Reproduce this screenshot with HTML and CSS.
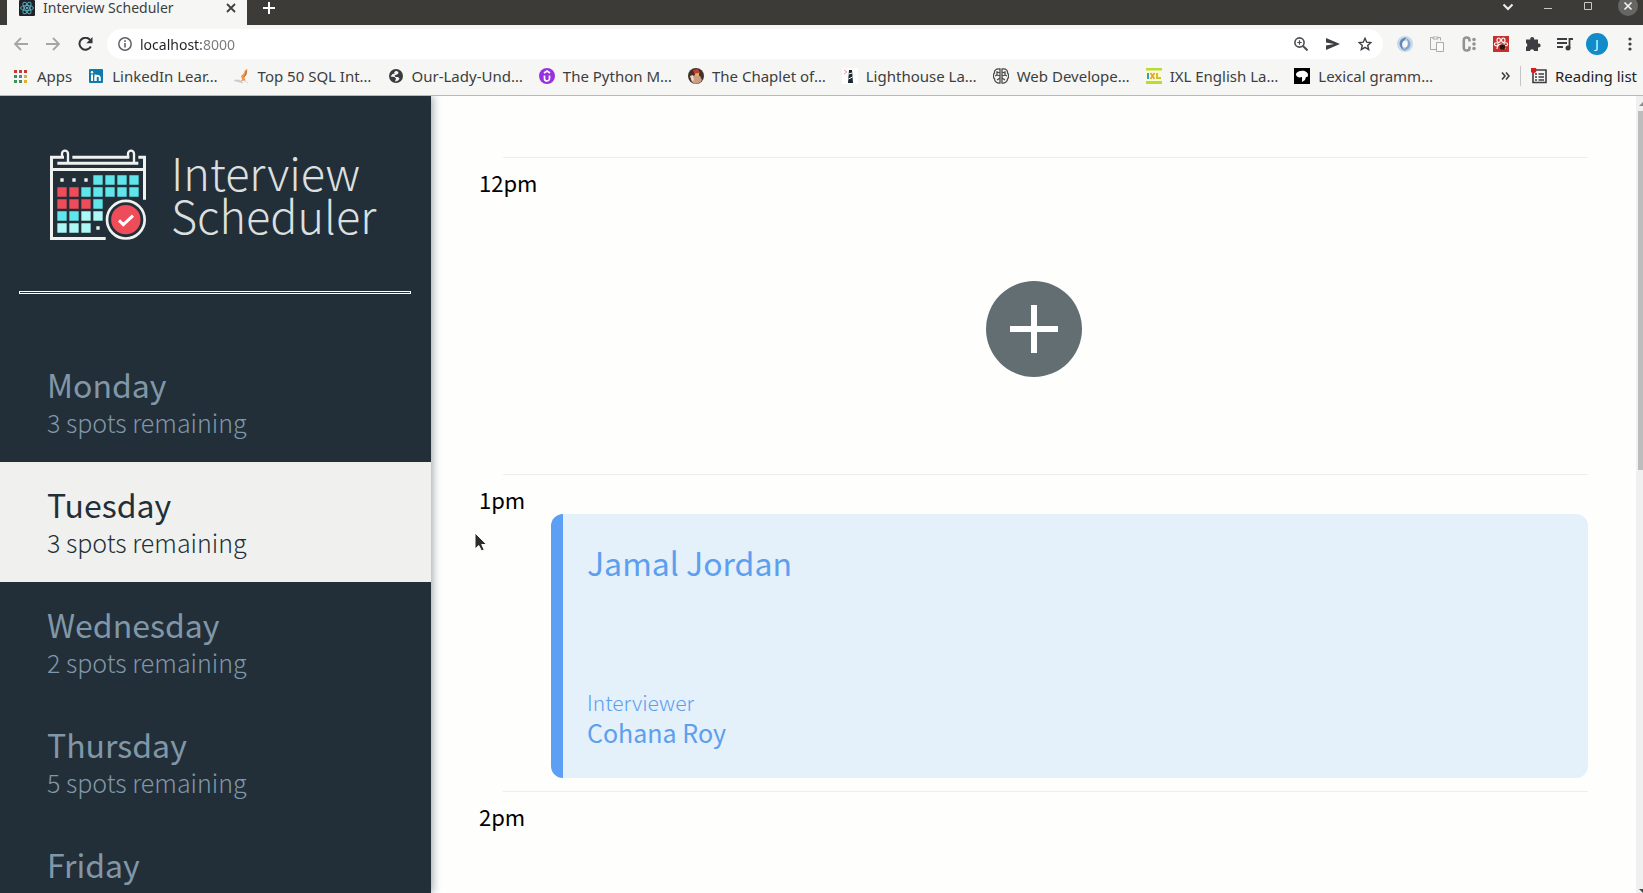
FILE: index.html
```html
<!DOCTYPE html>
<html lang="en">
<head>
<meta charset="utf-8">
<meta name="viewport" content="width=device-width, initial-scale=1">
<title>Interview Scheduler</title>
<link rel="stylesheet" href="styles.css">
</head>
<body>
<div class="window">
  <header class="chrome">
    <div class="tabstrip">
      <div class="tab">
        <svg class="tab-icon" width="16" height="16" viewBox="0 0 16 16" aria-hidden="true"><rect width="16" height="16" rx="1" fill="#20232a"/><g fill="none" stroke="#5aa9b8"><ellipse cx="8" cy="8" rx="6.5" ry="2.5"/><ellipse cx="8" cy="8" rx="6.5" ry="2.5" transform="rotate(60 8 8)"/><ellipse cx="8" cy="8" rx="6.5" ry="2.5" transform="rotate(120 8 8)"/></g><circle cx="8" cy="8" r="1.3" fill="#5aa9b8"/></svg>
        <span class="tab-title">Interview Scheduler</span>
        <button class="icon-btn" aria-label="Close tab"><svg width="10" height="10" viewBox="0 0 10 10"><path d="M1 1l8 8M9 1l-8 8" stroke="#3c4043" stroke-width="1.8"/></svg></button>
      </div>
      <button class="icon-btn new-tab" aria-label="New tab"><svg width="12" height="12" viewBox="0 0 12 12"><path d="M6 0v12M0 6h12" stroke="#fff" stroke-width="2"/></svg></button>
      <div class="window-controls">
        <button class="icon-btn" aria-label="Search tabs"><svg width="12" height="12" viewBox="0 0 12 12"><path d="M1.500 4.500L6 9l4.500-4.500" fill="none" stroke="#eee" stroke-width="2"/></svg></button>
        <button class="icon-btn" aria-label="Minimize"><svg width="8" height="12" viewBox="0 0 8 12"><path d="M0 8.500h8" stroke="#c8c8c4"/></svg></button>
        <button class="icon-btn" aria-label="Maximize"><svg width="8" height="12" viewBox="0 0 8 12"><path d="M.5 2.500h7v7h-7z" fill="none" stroke="#c8c8c4"/></svg></button>
        <button class="icon-btn" aria-label="Close window"><svg width="20" height="20" viewBox="0 0 20 20"><circle cx="10" cy="10" r="10" fill="#666663"/><path d="M6.500 6.500l7 7M13.500 6.500l-7 7" stroke="#f4f4f2" stroke-width="1.600"/></svg></button>
      </div>
    </div>

    <div class="toolbar">
      <div class="nav-buttons">
        <button class="icon-btn" aria-label="Back"><svg width="14" height="14" viewBox="0 0 14 14"><path d="M14 7H1.500M7 1L1 7l6 6" fill="none" stroke="#a3a5a7" stroke-width="1.800"/></svg></button>
        <button class="icon-btn" aria-label="Forward"><svg width="14" height="14" viewBox="0 0 14 14"><path d="M0 7h12.500M7 1l6 6-6 6" fill="none" stroke="#a3a5a7" stroke-width="1.800"/></svg></button>
        <button class="icon-btn" aria-label="Reload"><svg width="15" height="14" viewBox="0 0 15 14"><path d="M12.800 9.500A6 6 0 1 1 12 2.800" fill="none" stroke="#35363a" stroke-width="2"/><path d="M14.500 0v6.200H8.300z" fill="#35363a"/></svg></button>
      </div>
      <div class="omnibox">
        <svg width="14" height="14" viewBox="0 0 14 14" aria-hidden="true"><circle cx="7" cy="7" r="6.200" fill="none" stroke="#5f6368" stroke-width="1.500"/><path d="M7 6v4.500M7 3.300V5" stroke="#5f6368" stroke-width="1.600"/></svg>
        <input class="url" type="text" aria-label="Address" value="localhost:8000" spellcheck="false">
        <div class="omni-actions">
          <button class="icon-btn" aria-label="Zoom"><svg width="14" height="14" viewBox="0 0 14 14"><circle cx="5.500" cy="5.500" r="4.600" fill="none" stroke="#4b4d50" stroke-width="1.600"/><path d="M9 9l4.500 4.500" stroke="#4b4d50" stroke-width="2"/><path d="M5.500 3.300v4.400M3.300 5.500h4.400" stroke="#4b4d50" stroke-width="1.200"/></svg></button>
          <button class="icon-btn" aria-label="Send"><svg width="14" height="12" viewBox="0 0 14 12"><path d="M0 0l14 6-14 6V7.400L8 6 0 4.600z" fill="#3d3f42"/></svg></button>
          <button class="icon-btn" aria-label="Bookmark this page"><svg width="14" height="14" viewBox="0 0 14 14"><path d="M7 1.300l1.700 3.900 4.200.4-3.200 2.800 1 4.200L7 10.400l-3.700 2.200 1-4.200L1.100 5.600l4.200-.4z" fill="none" stroke="#3d3f42" stroke-width="1.400"/></svg></button>
        </div>
      </div>
      <div class="extensions">
        <button class="icon-btn" aria-label="JSON viewer"><svg width="16" height="16" viewBox="0 0 16 16"><circle cx="8" cy="8" r="8" fill="#c8d8ea"/><path d="M9 1.500C4 2 1.500 6 3 10c1 3 4 4.500 6 4.500-4-2-5-6-3-8.500C7.500 4 9 3.500 9 1.500z" fill="#6089b8"/><path d="M7 14.500c5-.5 7.500-4.500 6-8.500C12 3 9 1.500 7.500 1.500c3.500 2 4.500 6 2.500 8.500-1.500 1.700-3 2.500-3 4.500z" fill="#86a7ce"/><ellipse cx="8" cy="8" rx="2.500" ry="3.300" fill="#f7f8f8"/></svg></button>
        <button class="icon-btn" aria-label="Clipboard"><svg width="16" height="16" viewBox="0 0 16 16"><path d="M7 13.500H1.500v-12H4m5 0h2.500v3" fill="none" stroke="#aaa"/><path d="M4 3V1h1.500a1.200 1.200 0 0 1 2 0H9v2z" fill="none" stroke="#aaa"/><path d="M7.500 6.500h7v9h-7z" fill="#fafafa" stroke="#aaa"/></svg></button>
        <button class="icon-btn" aria-label="Colour picker"><svg width="16" height="16" viewBox="0 0 16 16"><path d="M8.500 5.500V4a2.500 2.500 0 0 0-2.500-2.500h-.5A2.700 2.700 0 0 0 2.800 4v8a2.500 2.500 0 0 0 2.700 2.500H6A2.500 2.500 0 0 0 8.500 12v-1.500" fill="none" stroke="#939393" stroke-width="2.600"/><g fill="#939393"><circle cx="13" cy="3.500" r="1.800"/><circle cx="13" cy="8" r="1.800"/><circle cx="13" cy="12.500" r="1.800"/></g></svg></button>
        <button class="icon-btn" aria-label="React tools"><svg width="16" height="16" viewBox="0 0 16 16"><path fill="#c8302e" d="M0 0h16v16H0z"/><g fill="none" stroke="#fff" stroke-width="1.100"><ellipse cx="5.700" cy="4.200" rx="1.700" ry="2.200"/><ellipse cx="10.300" cy="4.200" rx="1.700" ry="2.200"/><ellipse cx="3.300" cy="8.300" rx="1.900" ry="1.600"/><ellipse cx="12.700" cy="8.300" rx="1.900" ry="1.600"/><path d="M4 13c0-3 2-5 4-5s4 2 4 5"/></g><circle cx="9.500" cy="11" r="2.800" fill="#321314"/></svg></button>
        <button class="icon-btn" aria-label="Extensions"><svg width="16" height="16" viewBox="0 0 16 16"><path d="M1 3.500h4.300a2 2 0 1 1 3.800 0H13v4a2 2 0 1 1 0 3.800V15H9.200a2.200 2.200 0 0 0-4.300 0H1v-4a2.200 2.200 0 0 0 0-4z" fill="#3c3e41"/></svg></button>
        <button class="icon-btn" aria-label="Media controls"><svg width="16" height="16" viewBox="0 0 16 16"><path d="M0 3h10M0 7h10M0 11h6M12.500 12V3H16" fill="none" stroke="#3c3e41" stroke-width="1.800"/><circle cx="11" cy="12" r="2.500" fill="#3c3e41"/></svg></button>
        <button class="avatar" aria-label="Profile">J</button>
        <button class="icon-btn" aria-label="Menu"><svg width="4" height="14" viewBox="0 0 4 14" fill="#3c3e41"><circle cx="2" cy="2" r="1.600"/><circle cx="2" cy="7" r="1.600"/><circle cx="2" cy="12" r="1.600"/></svg></button>
      </div>
    </div>

    <nav class="bookmarks" aria-label="Bookmarks">
      <a class="bookmark" href="#"><svg width="16" height="16" viewBox="0 0 16 16"><path fill="#c33b32" d="M1 2h3v3H1zM6 2h3v3H6zM11 2h3v3h-3z"/><path fill="#3d9258" d="M1 7h3v3H1zM1 12h3v3H1z"/><path fill="#4288c9" d="M6 7h3v3H6z"/><path fill="#ddb032" d="M11 7h3v3h-3zM11 12h3v3h-3z"/><path fill="#3d9258" d="M6 12h3v3H6z"/></svg><span>Apps</span></a>
      <a class="bookmark" href="#"><svg width="16" height="16" viewBox="0 0 16 16"><rect x="1" y="1" width="14" height="14" rx="1" fill="#0f7bab"/><g fill="#fff"><path d="M3 6.500h2V13H3zM6.500 6.500h2V13h-2z"/><circle cx="4" cy="4.300" r="1.200"/></g><path d="M7.500 13V9.500a2.200 2.200 0 0 1 4.300 0V13" fill="none" stroke="#fff" stroke-width="2"/></svg><span>LinkedIn Lear…</span></a>
      <a class="bookmark" href="#"><svg width="16" height="16" viewBox="0 0 16 16"><path d="M13.500 1l-1 5-2 3 1 4-2-.5-3 1.500 1.500-2.500L7 8l3-3 1-3z" fill="#ee9a55"/><path d="M12.500 3l-.8 4-2 2" fill="none" stroke="#b85c1d"/><path d="M0 12.500c4-1.500 7 0 9 2.500-3-1-6-1.500-9-2.500zM10 12.500l4 2.500" fill="#bfc8d2" stroke="#c5ccd4" stroke-width=".7"/></svg><span>Top 50 SQL Int…</span></a>
      <a class="bookmark" href="#"><svg width="16" height="16" viewBox="0 0 16 16"><circle cx="8" cy="8" r="7" fill="#3a3b3e"/><path d="M2.500 8.500l4 .5 1.500 1.500-1 3c2 0 4-1 4.500-3L10 9H7.500L6.500 7.500 10 6l.5-2L8 2.800 6 4.500l1 1-2.500.5z" fill="#f5f5f3"/></svg><span>Our-Lady-Und…</span></a>
      <a class="bookmark" href="#"><svg width="16" height="16" viewBox="0 0 16 16"><circle cx="8" cy="8" r="8" fill="#9630e0"/><path d="M5.500 7.500v3a2.500 2.500 0 0 0 5 0v-3M5 5l3-2 3 2" fill="none" stroke="#fff" stroke-width="1.700"/></svg><span>The Python M…</span></a>
      <a class="bookmark" href="#"><svg width="16" height="16" viewBox="0 0 16 16"><circle cx="8" cy="8" r="8" fill="#44312c"/><path d="M3 9l4-2 5 1 2 4a8 8 0 0 1-9 3.400z" fill="#ca9d84"/><path d="M5 2l5-1 2 4-5 2z" fill="#bd4032"/><path d="M7 5.500l4-.5v3H7z" fill="#e6b446"/><path d="M2 8l3-1 1 5-2 2z" fill="#ead8c8"/></svg><span>The Chaplet of…</span></a>
      <a class="bookmark" href="#"><svg width="16" height="16" viewBox="0 0 16 16"><path fill="#fff" d="M0 0h16v16H0z"/><path d="M7 2h3l1 13H6z" fill="#1d2730"/><path d="M6.500 6l3.500-1M6.500 11l4-2" stroke="#fff"/><path d="M2 2l3 2-3 2" fill="none" stroke="#ea9b9b"/></svg><span>Lighthouse La…</span></a>
      <a class="bookmark" href="#"><svg width="16" height="16" viewBox="0 0 16 16"><g fill="none" stroke="#4b4b4b" stroke-width="1.300"><path d="M7 1C3 0 1 3 1.500 5-.5 7 .5 10 1.500 11c0 3 3 4.500 5.500 4zM9 1c4-1 6 2 5.500 4 2 2 1 5 0 6 0 3-3 4.500-5.500 4zM7 5L4 4v3l-2 1M7 10l-3 2M9 5l3-1v3l2 1M9 10l3 2M4 7l3 1M12 7L9 8"/></g></svg><span>Web Develope…</span></a>
      <a class="bookmark" href="#"><svg width="16" height="16" viewBox="0 0 16 16"><path fill="#fff9d5" d="M0 0h16v16H0z"/><path fill="#b8dc35" d="M0 0h16v2.500H0zM0 13h16v3H0z"/><path d="M2 5v6" stroke="#20a6c6" stroke-width="2"/><path d="M4.500 5l4 6M8.500 5l-4 6" stroke="#efa02a" stroke-width="1.700"/><path d="M11 5v5h4" fill="none" stroke="#c6c72c" stroke-width="2"/></svg><span>IXL English La…</span></a>
      <a class="bookmark" href="#"><svg width="16" height="16" viewBox="0 0 16 16"><path d="M0 0h16v16H0z"/><path d="M2 7c0-3 3-4 5-4 3-1 7 1 7 4 0 2-1 2-2 2l-1 3-3 2V9C5 10 3 9 2 7z" fill="#fff"/></svg><span>Lexical gramm…</span></a>
      <div class="bookmarks-end">
        <button class="icon-btn" aria-label="More bookmarks"><svg width="9" height="8" viewBox="0 0 9 8"><path d="M1 .5L4 4 1 7.500M5 .5L8 4 5 7.500" fill="none" stroke="#3c3e41" stroke-width="1.600"/></svg></button>
        <a class="bookmark reading-list" href="#"><svg width="16" height="16" viewBox="0 0 16 16"><path d="M2 2h13v12.500H2z" fill="none" stroke="#3c3e41" stroke-width="1.600"/><path d="M4 6h2M4 9h2M4 12h2M7.500 6H13M7.500 9H13M7.500 12H13" stroke="#3c3e41" stroke-width="1.400"/><circle cx="2.500" cy="2" r="3" fill="#d51f1f"/></svg><span>Reading list</span></a>
      </div>
    </nav>
  </header>

  <div class="page">
    <aside class="sidebar">
      <div class="brand">
        <svg class="brand-mark" width="98" height="92" viewBox="147 57 294 276" aria-hidden="true">
          <g fill="none" stroke="#f0f2f0" stroke-width="9">
            <path d="M192 82H154.500V325.500H317M217 82H388M415 82H433.500V209M172 100H415M154 118.500H434"/>
            <path d="M204 99V71a8.500 8.500 0 0 0-18 0V82M402 99V71a8.500 8.500 0 0 0-18 0V82" stroke-width="7"/>
          </g>
          <g fill="#60e6ea"><path d="M280 136h28v28h-28zM316 136h28v28h-28zM352 136h28v28h-28zM388 136h28v28h-28zM244 172h28v28h-28zM280 172h28v28h-28zM316 172h28v28h-28zM352 172h28v28h-28zM388 172h28v28h-28zM280 208h28v28h-28zM172 244h28v28h-28zM208 244h28v28h-28z"/></g>
          <path fill="#ef4c59" d="M172 172h28v28h-28zM208 172h28v28h-28zM172 208h28v28h-28zM208 208h28v28h-28zM244 208h28v28h-28z"/>
          <path fill="#adf8f4" d="M244 244h28v28h-28zM280 244h28v28h-28zM172 280h28v28h-28zM208 280h28v28h-28zM244 280h28v28h-28z"/>
          <path fill="#f0f2f0" d="M181 145h10v10h-10zM217 145h10v10h-10zM253 145h10v10h-10zM289 289h10v10h-10z"/>
          <circle cx="377.500" cy="269" r="56.500" fill="#222f39" stroke="#f0f2f0" stroke-width="8"/>
          <circle cx="377.500" cy="269" r="44" fill="#ef4c59"/>
          <path d="M357 271l13 13 29-27" fill="none" stroke="#fff" stroke-width="9"/>
        </svg>
        <h1 class="brand-name">Interview<br>Scheduler</h1>
      </div>
      <hr class="sidebar-rule">
      <ul class="days">
        <li><button class="day"><span class="day-name">Monday</span><span class="day-spots">3 spots remaining</span></button></li>
        <li><button class="day day-selected" aria-current="true"><span class="day-name">Tuesday</span><span class="day-spots">3 spots remaining</span></button></li>
        <li><button class="day"><span class="day-name">Wednesday</span><span class="day-spots">2 spots remaining</span></button></li>
        <li><button class="day"><span class="day-name">Thursday</span><span class="day-spots">5 spots remaining</span></button></li>
        <li><button class="day"><span class="day-name">Friday</span></button></li>
      </ul>
    </aside>

    <main class="schedule">
      <article class="appointment">
        <hr class="slot-rule">
        <h2 class="slot-time">12pm</h2>
        <div class="slot-empty">
          <button class="add" aria-label="Add appointment"><svg width="96" height="96" viewBox="0 0 96 96"><circle cx="48" cy="48" r="48" fill="#636e72"/><path d="M48 24v48M24 48h48" stroke="#fff" stroke-width="6"/></svg></button>
        </div>
      </article>
      <article class="appointment">
        <hr class="slot-rule">
        <h2 class="slot-time">1pm</h2>
        <div class="card">
          <h3 class="student">Jamal Jordan</h3>
          <div class="interviewer">
            <h4 class="interviewer-label">Interviewer</h4>
            <p class="interviewer-name">Cohana Roy</p>
          </div>
        </div>
      </article>
      <article class="appointment">
        <hr class="slot-rule">
        <h2 class="slot-time">2pm</h2>
      </article>
    </main>

    <div class="scrollbar" aria-hidden="true">
      <svg width="7" height="15" viewBox="0 0 7 15"><path d="M3 10l4-4v4z" fill="#8c8c8c"/></svg>
      <div class="scroll-thumb"></div>
      <svg width="7" height="8" viewBox="0 0 7 8"><path d="M3 4h4v4z" fill="#444"/></svg>
    </div>
  </div>

  <svg class="pointer" width="14" height="21" viewBox="0 0 14 21" aria-hidden="true"><path d="M1 1v16l3.800-3.500L7.500 19l2.700-1.300-2.500-5.200h5z" fill="#2b2b2b" stroke="#fff"/></svg>
</div>
</body>
</html>
```
FILE: styles.css
```css
* {
  box-sizing: border-box;
}

body {
  margin: 0;
  background: #fefefd;
  font-family: "Noto Sans CJK SC", "Noto Sans", sans-serif;
}

h1, h2, h3, h4, p, ul {
  margin: 0;
  padding: 0;
  font-weight: 400;
}

button {
  border: 0;
  padding: 0;
  background: none;
  color: inherit;
  font: inherit;
  cursor: pointer;
}

svg {
  display: block;
  flex: none;
}

.window {
  position: relative;
  display: flex;
  flex-direction: column;
  height: 100vh;
  overflow: hidden;
}

/* Browser frame */

.chrome {
  flex: none;
  border-bottom: 1px solid #b8b9b8;
  background: #f6f6f4;
  color: #3c3e41;
  font-family: "Noto Sans", sans-serif;
  font-size: 15px;
}

.icon-btn {
  display: flex;
  align-items: center;
  justify-content: center;
}

.tabstrip {
  display: flex;
  height: 25px;
  padding-left: 7px;
  background: #3c3b38;
}

.tab {
  display: flex;
  align-items: center;
  width: 240px;
  padding: 0 11px 9px 12px;
  background: #f6f6f4;
}

.tab-title {
  flex: 1;
  padding-left: 8px;
  font-size: 14px;
  line-height: 16px;
}

.new-tab {
  margin-left: 16px;
  padding-bottom: 9px;
}

.window-controls {
  display: flex;
  align-items: center;
  gap: 20px;
  margin-left: auto;
  padding: 0 5px 14px 0;
}

.window-controls .icon-btn {
  width: 20px;
}

.toolbar {
  display: flex;
  align-items: center;
  gap: 14px;
  height: 38px;
  padding: 0 11px 0 14px;
}

.nav-buttons {
  display: flex;
  gap: 18px;
}

.omnibox {
  display: flex;
  flex: 1;
  align-items: center;
  gap: 8px;
  height: 30px;
  padding: 0 11px;
  border-radius: 15px;
  background: #fff;
}

.url {
  flex: 1;
  min-width: 0;
  border: 0;
  padding: 0;
  outline: 0;
  background: linear-gradient(90deg, #202124 61px, #77797c 61px);
  background-clip: text;
  -webkit-background-clip: text;
  color: transparent;
  font-family: inherit;
  font-size: 14px;
}

.omni-actions,
.extensions {
  display: flex;
  align-items: center;
  gap: 18px;
}

.extensions {
  gap: 16px;
}

.avatar {
  width: 22px;
  height: 22px;
  margin: 0 4px 0 -3px;
  border-radius: 50%;
  background: #128bcb;
  color: #fff;
  font-size: 12px;
}

.bookmarks {
  display: flex;
  align-items: center;
  gap: 16px;
  height: 32px;
  padding: 0 6px 6px 13px;
}

.bookmark {
  display: flex;
  align-items: center;
  gap: 8px;
  color: #3c3e41;
  line-height: 20px;
  text-decoration: none;
  white-space: nowrap;
}

.bookmarks-end {
  display: flex;
  align-items: center;
  gap: 10px;
  margin-left: auto;
}

.reading-list {
  padding-left: 10px;
  border-left: 1px solid #c4c5c4;
  color: #222326;
}

/* Scheduler page */

.page {
  display: flex;
  flex: 1;
  min-height: 0;
  overflow: hidden;
}

.sidebar {
  z-index: 1;
  flex: none;
  width: 431px;
  background: #222f39;
  box-shadow: 2px 0 8px rgba(34, 47, 57, 0.4);
}

.brand {
  display: flex;
  align-items: flex-start;
  gap: 24px;
  padding: 53px 24px 0 49px;
}

.brand-name {
  padding-top: 1px;
  color: #dcdfdf;
  font-size: 45px;
  font-weight: 200;
  line-height: 43px;
}

.sidebar-rule {
  height: 3px;
  margin: 50px 20px 48px 19px;
  border: 1px solid #fff;
}

.days {
  list-style: none;
}

.day {
  display: flex;
  flex-direction: column;
  gap: 2px;
  width: 100%;
  height: 120px;
  padding: 24px 24px 0 47px;
  color: #8197a8;
  text-align: left;
}

.day-selected {
  background: #f0f1ef;
  color: #222f39;
}

.day-name {
  font-size: 32px;
  line-height: 36px;
}

.day-spots {
  font-size: 25px;
  font-weight: 200;
  line-height: 36px;
}

.schedule {
  flex: 1;
  min-width: 0;
  padding: 61px 48px 0;
  overflow: hidden;
}

.appointment {
  padding-bottom: 13px;
}

.slot-rule {
  height: 1px;
  margin: 0 0 0 24px;
  border: 0;
  background: #ededec;
}

.slot-time {
  padding-top: 9px;
  color: #000;
  font-size: 22px;
  line-height: 30px;
}

.slot-empty {
  display: flex;
  align-items: center;
  justify-content: center;
  height: 264px;
}

.card {
  display: flex;
  flex-direction: column;
  justify-content: space-between;
  height: 264px;
  margin-left: 72px;
  padding: 30px 24px;
  border-left: 12px solid #5c9ff5;
  border-radius: 12px;
  background: #e4f0fa;
  color: #5c9fee;
}

.student {
  font-size: 32px;
  line-height: 36px;
}

.interviewer-label {
  font-size: 21px;
  font-weight: 200;
  line-height: 28px;
}

.interviewer-name {
  font-size: 25px;
  line-height: 32px;
}

.scrollbar {
  display: flex;
  flex: none;
  flex-direction: column;
  width: 7px;
  background: #f0f0f0;
}

.scroll-thumb {
  height: 45%;
  margin: 0 0 auto 2px;
  background: #bdbdbd;
}

.pointer {
  position: absolute;
  top: 532px;
  left: 474px;
}
```
